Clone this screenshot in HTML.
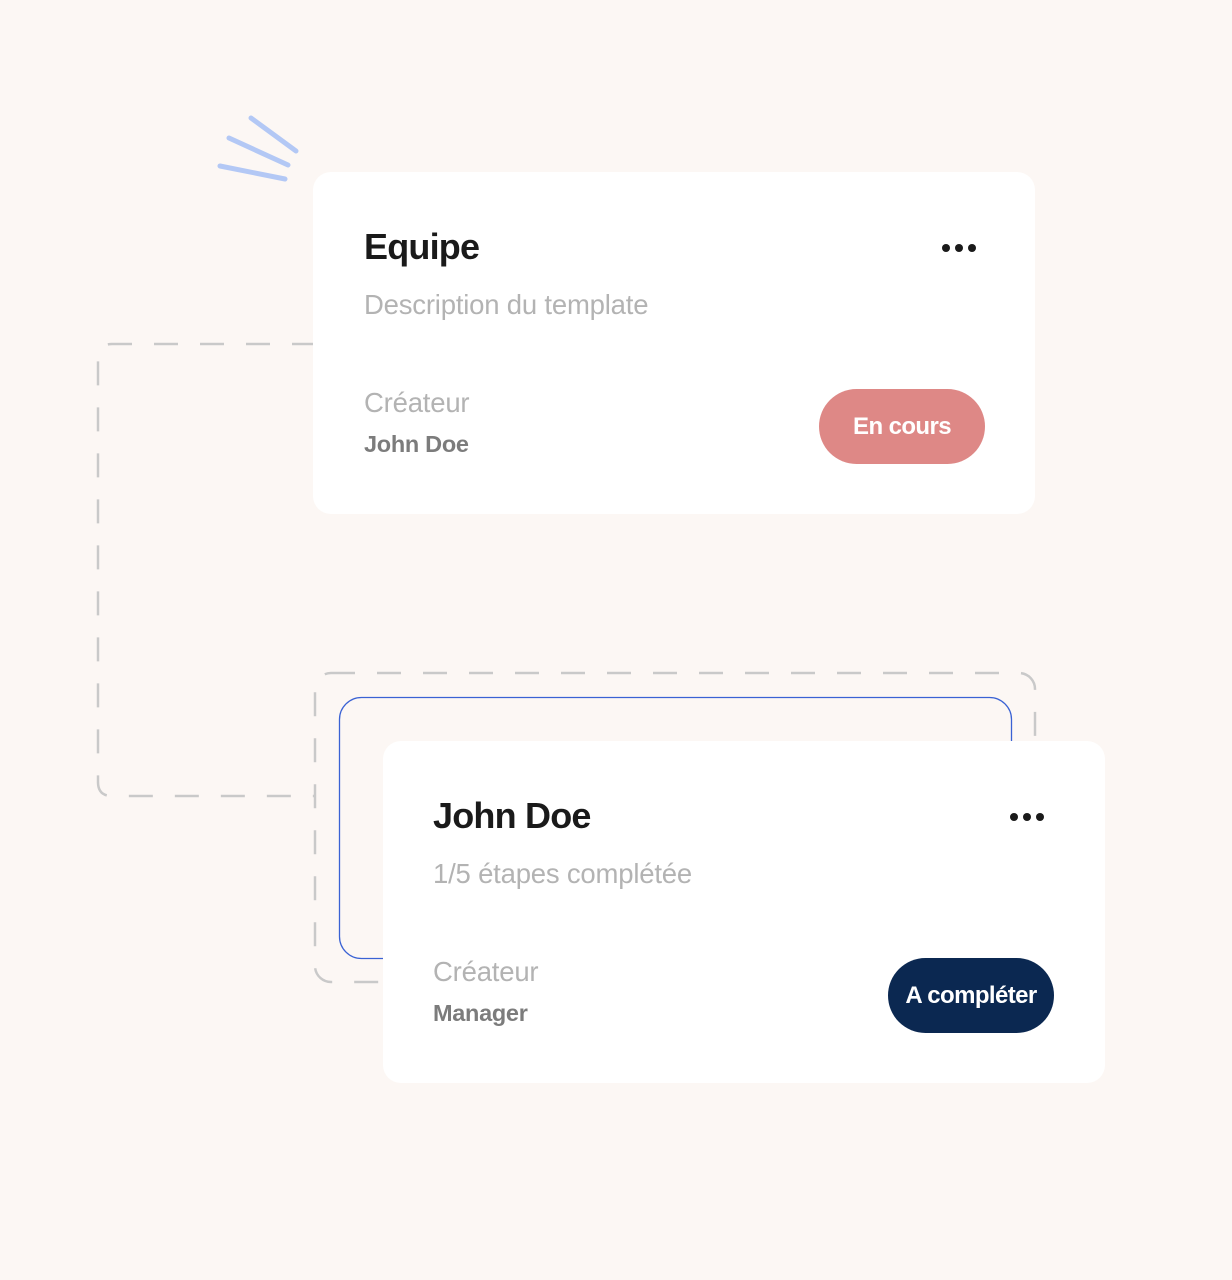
<!DOCTYPE html>
<html><head><meta charset="utf-8"><style>
body{margin:0;width:1232px;height:1280px;background:#fcf7f4;position:relative;overflow:hidden;font-family:"Liberation Sans",Arial,sans-serif}
.card{position:absolute;background:#fff;border-radius:18px;width:722px;height:342px}
.t{position:absolute;left:51px;top:54px;font-size:36px;font-weight:bold;color:#1a1a1a;letter-spacing:-0.8px}
.d{position:absolute;left:51px;top:117px;font-size:27.5px;color:#b3b3b3;letter-spacing:-0.2px}
.c{position:absolute;left:51px;top:215px;font-size:27.5px;color:#b3b3b3;letter-spacing:-0.2px}
.n{position:absolute;left:51px;top:259px;font-size:23.5px;font-weight:bold;color:#7c7c7c;letter-spacing:-0.3px}
.p{position:absolute;left:506px;top:217px;width:166px;height:75px;border-radius:38px;color:#fff;font-weight:bold;font-size:24px;line-height:75px;text-align:center;letter-spacing:-0.6px}
.dots{position:absolute;left:629px;top:67px}
.dots i{display:inline-block;width:8px;height:8px;border-radius:50%;background:#1a1a1a;margin-right:5px}
</style></head><body>
<svg style="position:absolute;left:0;top:0" width="1232" height="1280">
<g stroke="#b3c8f5" stroke-width="5" stroke-linecap="round">
<line x1="251" y1="118" x2="296" y2="151"/><line x1="229" y1="138" x2="288" y2="165"/><line x1="220" y1="166" x2="285" y2="179"/></g>
<g fill="none" stroke="#c9c9c9" stroke-width="2.5" stroke-dasharray="24 22">
<path d="M316 344 H112 Q98 344 98 358 V782 Q98 796 112 796 H316"/>
<rect x="315" y="673" width="720" height="309" rx="16"/>
</g>
<rect x="339.5" y="697.5" width="672" height="261" rx="22" fill="none" stroke="#3a62d4" stroke-width="1.3"/>
</svg>
<div class="card" style="left:313px;top:172px">
<div class="t">Equipe</div><div class="d">Description du template</div>
<div class="c">Créateur</div><div class="n">John Doe</div>
<div class="dots"><i></i><i></i><i></i></div>
<div class="p" style="background:#de8886">En cours</div></div>
<div class="card" style="left:383px;top:741px">
<div class="t" style="left:50px">John Doe</div><div class="d" style="left:50px">1/5 étapes complétée</div>
<div class="c" style="left:50px">Créateur</div><div class="n" style="left:50px">Manager</div>
<div class="dots" style="left:627px"><i></i><i></i><i></i></div>
<div class="p" style="left:505px;background:#0b2851">A compléter</div></div>
</body></html>
